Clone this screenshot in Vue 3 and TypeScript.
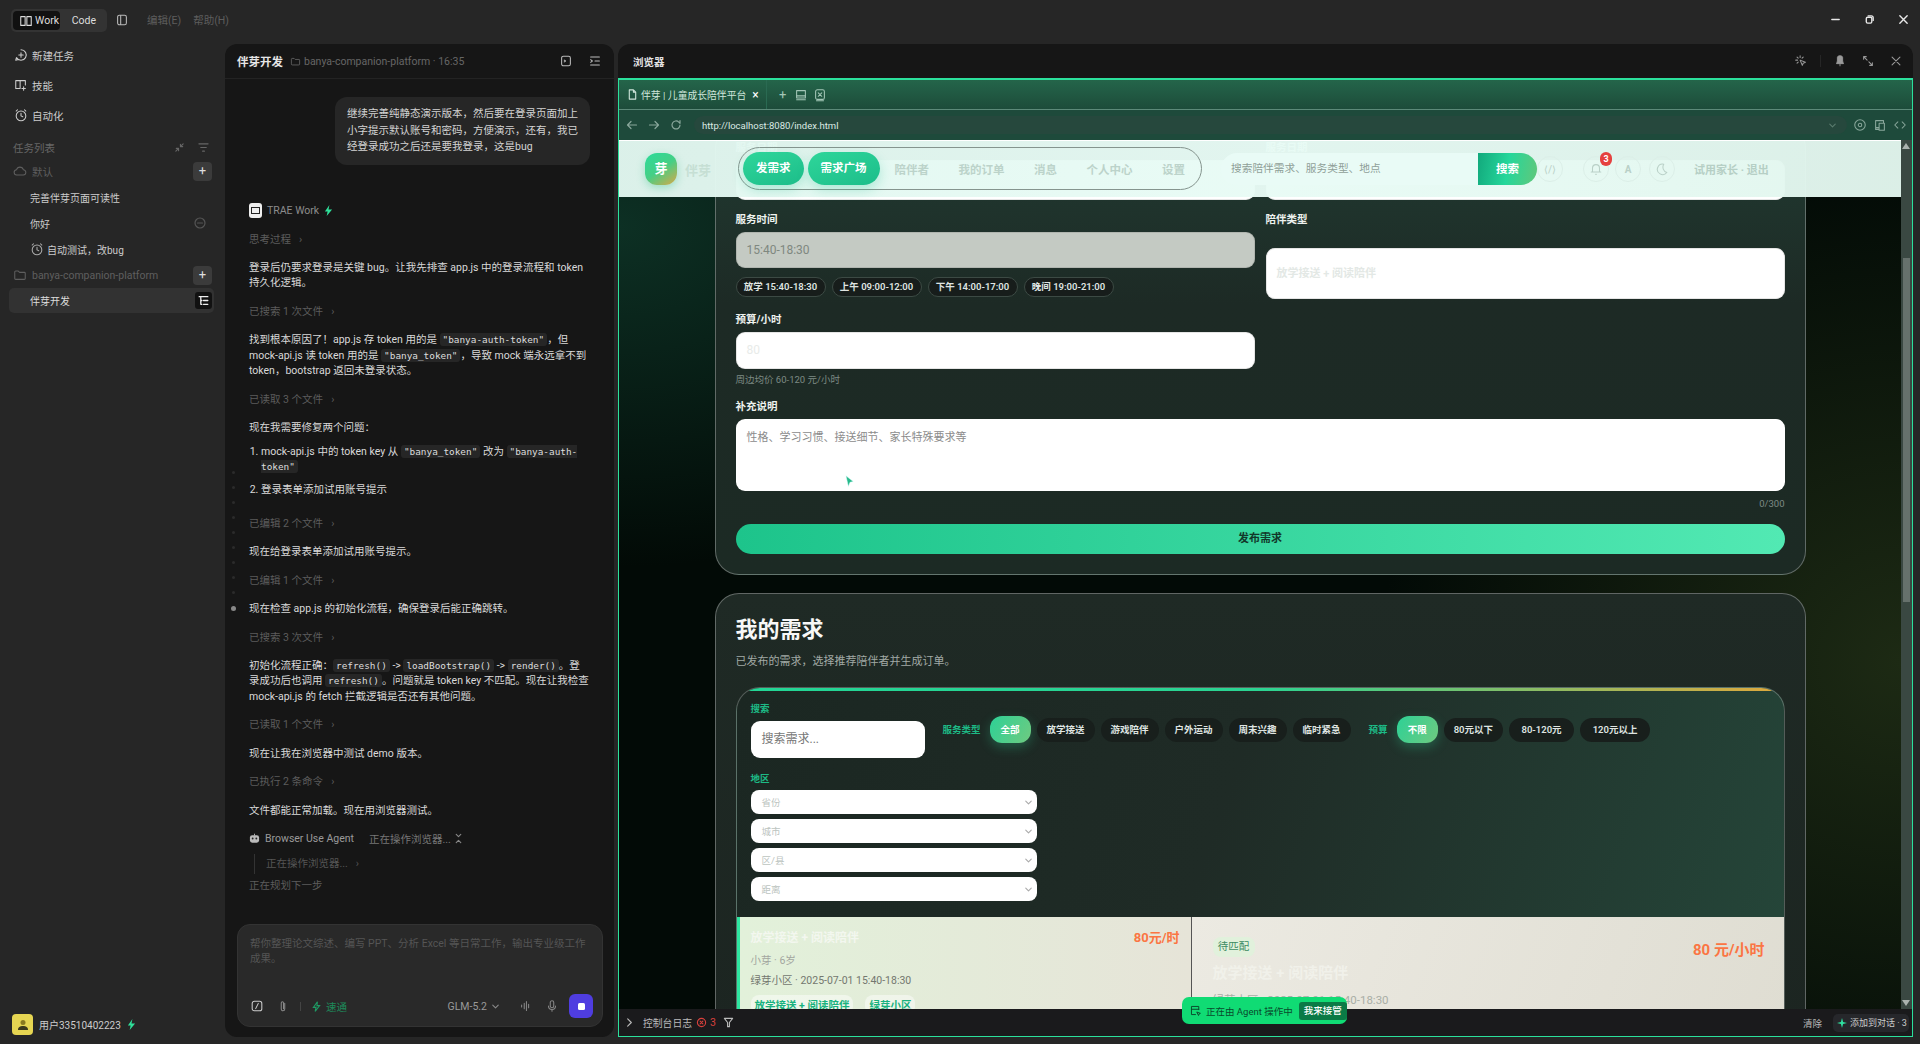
<script setup lang="ts">
type Block = { kind: 'text' | 'meta' | 'list'; text?: string; items?: string[] }

const BLOCKS: Block[] = [
  { kind: 'meta', text: '思考过程' },
  { kind: 'text', text: '登录后仍要求登录是关键 bug。让我先排查 app.js 中的登录流程和 token 持久化逻辑。' },
  { kind: 'meta', text: '已搜索 1 次文件' },
  { kind: 'text', text: '找到根本原因了！app.js 存 token 用的是 `"banya-auth-token"`，但 mock-api.js 读 token 用的是 `"banya_token"`，导致 mock 端永远拿不到 token，bootstrap 返回未登录状态。' },
  { kind: 'meta', text: '已读取 3 个文件' },
  { kind: 'text', text: '现在我需要修复两个问题：' },
  { kind: 'list', items: ['mock-api.js 中的 token key 从 `"banya_token"` 改为 `"banya-auth-token"`', '登录表单添加试用账号提示'] },
  { kind: 'meta', text: '已编辑 2 个文件' },
  { kind: 'text', text: '现在给登录表单添加试用账号提示。' },
  { kind: 'meta', text: '已编辑 1 个文件' },
  { kind: 'text', text: '现在检查 app.js 的初始化流程，确保登录后能正确跳转。' },
  { kind: 'meta', text: '已搜索 3 次文件' },
  { kind: 'text', text: '初始化流程正确：`refresh()` -> `loadBootstrap()` -> `render()`。登录成功后也调用 `refresh()`。问题就是 token key 不匹配。现在让我检查 mock-api.js 的 fetch 拦截逻辑是否还有其他问题。' },
  { kind: 'meta', text: '已读取 1 个文件' },
  { kind: 'text', text: '现在让我在浏览器中测试 demo 版本。' },
  { kind: 'meta', text: '已执行 2 条命令' },
  { kind: 'text', text: '文件都能正常加载。现在用浏览器测试。' }
]

// backticks mark inline code, so odd parts are code
function parts(s: string) {
  return s.split('`').map((text, i) => ({ text, code: i % 2 === 1 }))
}

const DOTS = Array.from({ length: 9 })
const NAV_LINKS = ['陪伴者', '我的订单', '消息', '个人中心', '设置']
const TIME_CHIPS = ['放学 15:40-18:30', '上午 09:00-12:00', '下午 14:00-17:00', '晚间 19:00-21:00']
const SERVICE_CHIPS = ['放学接送', '游戏陪伴', '户外运动', '周末兴趣', '临时紧急']
const BUDGET_CHIPS = ['80元以下', '80-120元', '120元以上']
const REGIONS = ['省份', '城市', '区/县', '距离']
</script>

<template>
  <div class="app">
    <header class="titlebar">
      <div class="mode-switch">
        <span class="mode active">
          <svg class="ico" viewBox="0 0 16 16"><path d="M2 3h5v10H2zM9 3h5v10H9z" /></svg>Work
        </span>
        <span class="mode">Code</span>
      </div>
      <svg class="ico layout-ico" viewBox="0 0 16 16"><rect x="3" y="2.5" width="10" height="11" rx="2" /><path d="M6.5 3v10" /></svg>
      <span class="menu first">编辑(E)</span>
      <span class="menu">帮助(H)</span>
      <div class="win-controls">
        <svg class="ico" viewBox="0 0 12 12"><path d="M2 6h8" /></svg>
        <svg class="ico" viewBox="0 0 12 12"><rect x="2.5" y="3.5" width="6" height="6.5" rx="1.5" /><path d="M4.5 2h3.5a2 2 0 0 1 2 2v3" /></svg>
        <svg class="ico" viewBox="0 0 12 12"><path d="M2 2l8 8M10 2l-8 8" /></svg>
      </div>
    </header>

    <div class="workspace">
      <aside class="sidebar">
        <div class="side-item">
          <svg class="ico" viewBox="0 0 16 16"><path d="M8 2a6 6 0 1 1-5.2 9L2 14l3-.8" /><path d="M8 5.5v5M5.5 8h5" /></svg>新建任务
        </div>
        <div class="side-item">
          <svg class="ico" viewBox="0 0 16 16"><path d="M2 3h5v9H2zM7 3h6v5M9 12h4M11 10v4" /></svg>技能
        </div>
        <div class="side-item">
          <svg class="ico" viewBox="0 0 16 16"><circle cx="8" cy="9" r="5.5" /><path d="M8 6v3l2 1M2.5 3.5 4 2M13.5 3.5 12 2" /></svg>自动化
        </div>
        <div class="side-heading">
          <span>任务列表</span>
          <svg class="ico small" viewBox="0 0 12 12"><path d="M7 5l3-3M7 2.5V5h2.5M5 7l-3 3M5 9.5V7H2.5" /></svg>
          <svg class="ico small" viewBox="0 0 12 12"><path d="M1 2h10M3 6h6M5 10h2" /></svg>
        </div>
        <div class="side-group">
          <svg class="ico" viewBox="0 0 16 16"><path d="M4.5 12.5a3 3 0 0 1-.4-6 4 4 0 0 1 7.7 0 3 3 0 0 1-.3 6z" /></svg>
          <span class="grow">默认</span>
          <span class="plus-btn">+</span>
        </div>
        <div class="task">完善伴芽页面可读性</div>
        <div class="task">
          <span class="grow">你好</span>
          <svg class="ico minus" viewBox="0 0 12 12"><circle cx="6" cy="6" r="5" /><path d="M3.5 6h5" /></svg>
        </div>
        <div class="task">
          <svg class="ico" viewBox="0 0 16 16"><circle cx="8" cy="9" r="5.5" /><path d="M8 6v3l2 1M2.5 3.5 4 2M13.5 3.5 12 2" /></svg>
          自动测试，改bug
        </div>
        <div class="side-group">
          <svg class="ico" viewBox="0 0 16 16"><path d="M2 4.5a1 1 0 0 1 1-1h3l1.5 1.5H13a1 1 0 0 1 1 1V12a1 1 0 0 1-1 1H3a1 1 0 0 1-1-1z" /></svg>
          <span class="grow">banya-companion-platform</span>
          <span class="plus-btn">+</span>
        </div>
        <div class="task active">
          <span class="grow">伴芽开发</span>
          <span class="tree-btn">
            <svg class="ico" viewBox="0 0 12 12"><path d="M2 2.5h8M6 6h4M6 9.5h4M3.5 2.500v7h1M3.5 6h1" /></svg>
          </span>
        </div>
        <div class="user">
          <span class="avatar">
            <svg viewBox="0 0 16 16"><circle cx="8" cy="5.5" r="2.5" fill="#8a7a20" /><path d="M3 13c0-3 2-4 5-4s5 1 5 4z" fill="#3d3a1c" /></svg>
          </span>
          用户33510402223
          <svg class="bolt" viewBox="0 0 10 12"><path d="M6 0 1 7h3l-1 5 6-7H5z" /></svg>
        </div>
      </aside>

      <section class="chat">
        <div class="panel-head">
          <b class="chat-title">伴芽开发</b>
          <svg class="ico small folder" viewBox="0 0 16 16"><path d="M2 4.5a1 1 0 0 1 1-1h3l1.5 1.5H13a1 1 0 0 1 1 1V12a1 1 0 0 1-1 1H3a1 1 0 0 1-1-1z" /></svg>
          <span class="chat-path">banya-companion-platform · 16:35</span>
          <svg class="ico head-ico" viewBox="0 0 16 16"><rect x="3" y="2.5" width="10" height="11" rx="2" /><path d="M6 7l1.5 1L6 9" /></svg>
          <svg class="ico head-ico" viewBox="0 0 16 16"><path d="M3 3.5h10M8 8h5M3 12.5h10M3 6.5 5 8l-2 1.5" /></svg>
        </div>
        <div class="messages">
          <div class="bubble">继续完善纯静态演示版本，然后要在登录页面加上小字提示默认账号和密码，方便演示，还有，我已经登录成功之后还是要我登录，这是bug</div>
          <div class="agent-line">
            <span class="agent-logo"><i /></span>TRAE Work
            <svg class="bolt" viewBox="0 0 10 12"><path d="M6 0 1 7h3l-1 5 6-7H5z" /></svg>
          </div>
          <template v-for="(b, i) in BLOCKS" :key="i">
            <div v-if="b.kind === 'meta'" class="meta">{{ b.text }}<span class="caret">›</span></div>
            <p v-else-if="b.kind === 'text'" class="msg">
              <template v-for="(p, j) in parts(b.text!)" :key="j"><code v-if="p.code">{{ p.text }}</code><template v-else>{{ p.text }}</template></template>
            </p>
            <ol v-else class="msg-list">
              <li v-for="(item, k) in b.items" :key="k">
                <template v-for="(p, j) in parts(item)" :key="j"><code v-if="p.code">{{ p.text }}</code><template v-else>{{ p.text }}</template></template>
              </li>
            </ol>
          </template>
          <div class="tool-line">
            <svg class="robot" viewBox="0 0 12 12"><rect x="1" y="2.5" width="10" height="8" rx="2.5" fill="#bbb" /><path d="M6 .8v2" stroke="#bbb" /><circle cx="4" cy="6" r="1" fill="#222" /><circle cx="8" cy="6" r="1" fill="#222" /></svg>
            <span>Browser Use Agent</span>
            <span class="tool-state">正在操作浏览器...</span>
            <svg class="ico small tool-toggle" viewBox="0 0 12 12"><path d="M3.5 1.500 6 4l2.500-2.500M3.5 10.500 6 8l2.500 2.500" /></svg>
          </div>
          <div class="tool-sub">正在操作浏览器...<span class="caret">›</span></div>
          <div class="planning">正在规划下一步</div>
        </div>
        <div class="composer">
          <div class="composer-text">帮你整理论文综述、编写 PPT、分析 Excel 等日常工作，输出专业级工作成果。</div>
          <div class="composer-tools">
            <svg class="ico tool" viewBox="0 0 16 16"><rect x="2.5" y="2.5" width="11" height="11" rx="2.5" /><path d="M9.5 5 6.5 11" /></svg>
            <svg class="ico tool dim" viewBox="0 0 16 16"><path d="M10 5v6.5a2 2 0 0 1-4 0V4.500a1.300 1.300 0 0 1 2.600 0V11" /></svg>
            <span class="tool-sep" />
            <svg class="speed-bolt" viewBox="0 0 10 12"><path d="M6 .7 1.5 7h3l-1 4.500L8.500 5H5.500z" /></svg>
            <span class="speed">速通</span>
            <span class="grow" />
            <span class="model">GLM-5.2</span>
            <svg class="ico small chev" viewBox="0 0 12 12"><path d="M3 4.500 6 7.500l3-3" /></svg>
            <svg class="ico tool dim wave" viewBox="0 0 16 16"><path d="M3 7v2M6 5v6M8.500 3v10M11 6v4" /></svg>
            <svg class="ico tool dim" viewBox="0 0 16 16"><rect x="6" y="2" width="4" height="8" rx="2" /><path d="M4 8a4 4 0 0 0 8 0M8 12v2" /></svg>
            <span class="stop"><i /></span>
          </div>
        </div>
        <div class="timeline">
          <i v-for="(_, i) in DOTS" :key="i" />
          <i class="on" />
        </div>
      </section>

      <section class="browser">
        <div class="browser-head">
          <b>浏览器</b>
          <span class="grow" />
          <svg class="ico" viewBox="0 0 16 16"><path d="M7 7l6 2.500-2.500 1L9.500 13zM4 7H2M7 4V2M4.800 4.800 3.500 3.500M9.200 4.800 10.500 3.500M4.800 9.200 3.500 10.500" /></svg>
          <span class="head-sep" />
          <svg class="pin" viewBox="0 0 16 16"><path d="M8 14V11M4 11c0-1 1-1.500 1-3V4c0-1 1-2 3-2s3 1 3 2v4c0 1.500 1 2 1 3z" fill="#9a9a9a" /></svg>
          <svg class="ico" viewBox="0 0 16 16"><path d="M3 3l4 4M3 3v3M3 3h3M13 13l-4-4M13 13v-3M13 13h-3" /></svg>
          <svg class="ico" viewBox="0 0 16 16"><path d="M3.500 3.500l9 9M12.500 3.500l-9 9" /></svg>
        </div>

        <div class="frame">
          <div class="tabbar">
            <div class="tab">
              <svg class="ico small" viewBox="0 0 12 12"><path d="M2.500 1h4.500l2.500 2.500V11h-7zM7 1v2.500h2.500" /></svg>
              <span>伴芽 | 儿童成长陪伴平台</span>
              <span class="tab-x">×</span>
            </div>
            <span class="tab-plus">+</span>
            <svg class="ico tab-ico" viewBox="0 0 16 16"><rect x="3" y="3" width="10" height="8.500" /><path d="M3 13.500h10M3 9h10" /></svg>
            <svg class="ico tab-ico" viewBox="0 0 16 16"><rect x="3" y="2" width="10" height="11" rx="2" /><path d="M6 5.500l4 4M10 5.500l-4 4M4 14.500h8" /></svg>
          </div>
          <div class="addressbar">
            <svg class="ico nav-ico" viewBox="0 0 12 12"><path d="M10.500 6H1.500M5 2.500 1.500 6 5 9.500" /></svg>
            <svg class="ico nav-ico" viewBox="0 0 12 12"><path d="M1.500 6h9M7 2.500 10.500 6 7 9.500" /></svg>
            <svg class="ico nav-ico reload" viewBox="0 0 12 12"><path d="M10 6a4 4 0 1 1-1.200-2.900L10 4.300V1.500" /></svg>
            <div class="url">
              <span>http://localhost:8080/index.html</span>
              <svg class="ico small" viewBox="0 0 12 12"><path d="M3 4.500 6 7.500l3-3" /></svg>
            </div>
            <svg class="ico addr-ico" viewBox="0 0 16 16"><circle cx="8" cy="8" r="6" /><circle cx="8" cy="8" r="2" /></svg>
            <svg class="ico addr-ico" viewBox="0 0 16 16"><path d="M7 13H3V3h9v3M7 6h6v8H7zM3 11h4" /></svg>
            <svg class="ico addr-ico" viewBox="0 0 16 16"><path d="M5.500 4.500 2 8l3.500 3.500M10.500 4.500 14 8l-3.500 3.500" /></svg>
          </div>

          <div class="page">
            <div class="page-view">
              <div class="page-scroll">
                <div class="card form-card">
                  <div class="form-row">
                    <div>
                      <div class="label">服务日期</div>
                      <div class="input clipped" />
                    </div>
                    <div>
                      <div class="label">服务日期</div>
                      <div class="input clipped" />
                    </div>
                  </div>
                  <div class="form-row second">
                    <div>
                      <div class="label">服务时间</div>
                      <div class="input time">15:40-18:30</div>
                      <div class="time-chips">
                        <span v-for="c in TIME_CHIPS" :key="c">{{ c }}</span>
                      </div>
                      <div class="label budget">预算/小时</div>
                      <div class="input budget-input">80</div>
                      <div class="hint">周边均价 60-120 元/小时</div>
                    </div>
                    <div>
                      <div class="label">陪伴类型</div>
                      <div class="input type-select">放学接送 + 阅读陪伴</div>
                    </div>
                  </div>
                  <div class="label note">补充说明</div>
                  <div class="textarea">性格、学习习惯、接送细节、家长特殊要求等</div>
                  <div class="count">0/300</div>
                  <div class="publish">发布需求</div>
                </div>

                <div class="card list-card">
                  <h2>我的需求</h2>
                  <p class="sub">已发布的需求，选择推荐陪伴者并生成订单。</p>
                  <div class="filters">
                    <div class="filter-body">
                      <div class="filter-top">
                        <div>
                          <div class="f-label">搜索</div>
                          <div class="f-search">搜索需求...</div>
                        </div>
                        <div class="f-group">
                          <span class="f-label">服务类型</span>
                          <span class="pill on">全部</span>
                          <span v-for="c in SERVICE_CHIPS" :key="c" class="pill">{{ c }}</span>
                        </div>
                        <div class="f-group budget-group">
                          <span class="f-label">预算</span>
                          <span class="pill on">不限</span>
                          <span v-for="c in BUDGET_CHIPS" :key="c" class="pill">{{ c }}</span>
                        </div>
                      </div>
                      <div class="f-label region">地区</div>
                      <div class="regions">
                        <div v-for="r in REGIONS" :key="r" class="region-select">
                          <span>{{ r }}</span>
                          <svg class="ico small" viewBox="0 0 12 12"><path d="M3 4.500 6 7.500l3-3" /></svg>
                        </div>
                      </div>
                    </div>
                    <div class="results">
                      <div class="result first">
                        <div class="r-head"><b>放学接送 + 阅读陪伴</b><b class="price">80元/时</b></div>
                        <div class="r-who">小芽 · 6岁</div>
                        <div class="r-where">绿芽小区 · 2025-07-01 15:40-18:30</div>
                        <div class="r-tags"><span>放学接送 + 阅读陪伴</span><span>绿芽小区</span></div>
                      </div>
                      <div class="result detail">
                        <div class="d-main">
                          <span class="badge">待匹配</span>
                          <div class="d-title">放学接送 + 阅读陪伴</div>
                          <div class="d-where">绿芽小区 · 2025-07-01 15:40-18:30</div>
                        </div>
                        <b class="d-price">80 元/小时</b>
                      </div>
                    </div>
                  </div>
                </div>
              </div>

              <div class="page-header">
                <span class="logo">芽</span>
                <b class="brand">伴芽</b>
                <nav class="nav">
                  <span class="nav-btn">发需求</span>
                  <span class="nav-btn">需求广场</span>
                  <span v-for="n in NAV_LINKS" :key="n" class="nav-link">{{ n }}</span>
                </nav>
                <div class="search">
                  <span class="search-text">搜索陪伴需求、服务类型、地点</span>
                  <b class="search-btn">搜索</b>
                </div>
                <span class="round first">
                  <span class="round-text">⟨/⟩</span>
                </span>
                <span class="round bell">
                  <svg class="ico" viewBox="0 0 16 16"><path d="M4 11.500V7a4 4 0 0 1 8 0v4.500zM2.500 11.500h11M7.500 14h1" /></svg>
                  <i class="bell-badge">3</i>
                </span>
                <span class="round"><b class="round-text">A</b></span>
                <span class="round moon">
                  <svg class="ico" viewBox="0 0 16 16"><path d="M10 2.500a6 6 0 1 0 3.500 9.500A6.500 6.500 0 0 1 10 2.500z" /></svg>
                </span>
                <b class="account">试用家长 · 退出</b>
              </div>

              <svg class="cursor" viewBox="0 0 12 16"><path d="M1 1l9 7-4 1-2 5z" fill="#27b98a" stroke="#dff" stroke-width=".6" /></svg>
            </div>
            <div class="scrollbar">
              <i class="arrow up" />
              <i class="thumb" />
              <i class="arrow down" />
            </div>
          </div>

          <div class="console">
            <svg class="ico small" viewBox="0 0 12 12"><path d="M4 2l4 4-4 4" /></svg>
            <span class="console-title">控制台日志</span>
            <svg class="ico small err" viewBox="0 0 12 12"><circle cx="6" cy="6" r="4.500" /><path d="M4.500 4.500l3 3M7.500 4.500l-3 3" /></svg>
            <span class="err-count">3</span>
            <svg class="ico small funnel" viewBox="0 0 12 12"><path d="M1.500 1.500h9L7 6v4.500H5V6z" /></svg>
            <span class="grow" />
            <span class="console-clear">清除</span>
            <span class="add-chat">
              <svg class="spark" viewBox="0 0 12 12"><path d="M6 0l1.300 4.700L12 6 7.300 7.300 6 12 4.700 7.300 0 6l4.700-1.300z" /></svg>
              添加到对话 · 3
            </span>
          </div>

          <div class="agent-pill">
            <svg class="ico" viewBox="0 0 16 16"><path d="M12 7V3H3v10h5M3 6.500h9M10 10l4 1.500-1.500.6-.6 1.600z" /></svg>
            <span>正在由 Agent 操作中</span>
            <b>我来接管</b>
          </div>
        </div>
      </section>
    </div>
  </div>
</template>

<style scoped>
.app {
  --sans: Roboto, "Noto Sans CJK SC", sans-serif;
  width: 1920px;
  height: 1044px;
  display: flex;
  flex-direction: column;
  overflow: hidden;
  background: #262626;
  color: #ddd;
  font-family: var(--sans);
  font-size: 10.5px;
}
.grow {
  flex: 1;
}
.ico {
  width: 14px;
  height: 14px;
  flex: none;
  fill: none;
  stroke: currentColor;
  stroke-width: 1.2;
  stroke-linecap: round;
  stroke-linejoin: round;
}
.ico.small {
  width: 11px;
  height: 11px;
}
.bolt {
  width: 9px;
  height: 11px;
  flex: none;
  fill: #2fe09a;
}

/* title bar */
.titlebar {
  height: 44px;
  flex: none;
  display: flex;
  align-items: flex-start;
  padding: 9px 11px 0 11px;
  box-sizing: border-box;
}
.mode-switch {
  display: flex;
  width: 96px;
  height: 23px;
  padding: 2px;
  box-sizing: border-box;
  background: #333;
  border-radius: 5px;
  line-height: 19px;
  color: #ddd;
}
.mode {
  padding: 0 9px 0 12px;
}
.mode.active {
  display: flex;
  align-items: center;
  gap: 2px;
  width: 51px;
  box-sizing: border-box;
  padding: 0 0 0 6px;
  background: #111;
  border-radius: 4px;
}
.layout-ico {
  margin: 4px 0 0 8px;
  color: #bbb;
}
.menu {
  margin: 5px 0 0 12px;
  color: #5d5d5d;
  line-height: 14px;
}
.menu.first {
  margin-left: 18px;
}
.win-controls {
  margin-left: auto;
  display: flex;
  gap: 23px;
  color: #e8e8e8;
  padding-top: 5px;
}
.win-controls .ico {
  width: 11px;
  height: 11px;
  stroke-width: 1.5;
}

.workspace {
  flex: 1;
  min-height: 0;
  display: flex;
  padding-bottom: 7px;
}

/* left sidebar */
.sidebar {
  width: 225px;
  flex: none;
  box-sizing: border-box;
  margin-top: -4px;
  padding: 0 11px 2px 9px;
  display: flex;
  flex-direction: column;
}
.side-item {
  height: 30px;
  display: flex;
  align-items: center;
  gap: 4px;
  padding-left: 5px;
  color: #ccc;
  font-size: 10.5px;
}
.side-heading {
  display: flex;
  align-items: center;
  gap: 13px;
  height: 22px;
  margin-top: 6px;
  padding: 0 5px 0 4px;
  color: #666;
  font-size: 10.5px;
}
.side-heading span {
  flex: 1;
}
.side-group {
  height: 26px;
  display: flex;
  align-items: center;
  gap: 5px;
  padding: 0 2px 0 4px;
  color: #5f5f5f;
}
.plus-btn {
  width: 19px;
  height: 19px;
  background: #3b3b3b;
  border-radius: 4px;
  color: #ddd;
  text-align: center;
  line-height: 18px;
  font-size: 13px;
}
.task {
  height: 26px;
  display: flex;
  align-items: center;
  gap: 3px;
  padding: 0 8px 0 21px;
  color: #ccc;
  font-size: 10px;
}
.task .ico {
  color: #aaa;
}
.task .minus {
  width: 12px;
  height: 12px;
  color: #555;
}
.task.active {
  height: 25px;
  margin-top: 0;
  padding-right: 2px;
  background: #323232;
  border-radius: 5px;
  color: #ddd;
}
.tree-btn {
  width: 17px;
  height: 17px;
  display: flex;
  align-items: center;
  justify-content: center;
  background: #111;
  border-radius: 3px;
}
.tree-btn .ico {
  width: 13px;
  height: 13px;
  color: #eee;
}
.user {
  margin-top: auto;
  display: flex;
  align-items: center;
  gap: 6px;
  padding-left: 3px;
  color: #ccc;
  font-size: 10px;
}
.avatar {
  width: 21px;
  height: 21px;
  border-radius: 4px;
  background: #e6d552;
  display: flex;
  align-items: center;
  justify-content: center;
}
.avatar svg {
  width: 16px;
  height: 16px;
}

/* chat column */
.chat {
  position: relative;
  width: 389px;
  flex: none;
  display: flex;
  flex-direction: column;
  box-sizing: border-box;
  background: #161616;
  border-radius: 12px;
}
.panel-head {
  height: 35px;
  flex: none;
  display: flex;
  align-items: center;
  padding: 0 12px 0 12px;
  border-bottom: 1px solid #232323;
  box-sizing: border-box;
}
.chat-title {
  font-size: 11.5px;
  color: #e6e6e6;
}
.folder {
  margin-left: 7px;
  color: #666;
}
.chat-path {
  flex: 1;
  margin-left: 3px;
  color: #666;
}
.head-ico {
  margin-left: 15px;
  color: #bbb;
}
.messages {
  flex: 1;
  min-height: 0;
  padding: 18px 24px 0;
  display: flex;
  flex-direction: column;
  gap: 13.35px;
}
.bubble {
  align-self: flex-end;
  width: 255px;
  box-sizing: border-box;
  margin: 0 0 25px;
  padding: 9px 12px;
  background: #262626;
  border-radius: 12px;
  line-height: 16.7px;
  color: #d4d4d4;
}
.agent-line {
  height: 15px;
  display: flex;
  align-items: center;
  gap: 5px;
  color: #8c8c8c;
}
.agent-logo {
  width: 13px;
  height: 15px;
  background: #eee;
  border-radius: 3px;
  display: flex;
  align-items: center;
  justify-content: center;
}
.agent-logo i {
  width: 7px;
  height: 5px;
  border: 1.5px solid #222;
}
.meta {
  height: 15px;
  line-height: 15px;
  color: #5c5c5c;
}
.caret {
  margin-left: 8px;
}
.msg {
  margin: 0;
  line-height: 15.3px;
  color: #d9d9d9;
}
code {
  font-family: "DejaVu Sans Mono", monospace;
  font-size: 9.4px;
  padding: 1px 3px;
  background: #262626;
  border-radius: 3px;
  color: #ddd;
}
.msg-list {
  margin: -4.5px 0 5.5px;
  padding: 0 0 0 12px;
  line-height: 15.3px;
  color: #d9d9d9;
}
.msg-list li + li {
  margin-top: 7px;
}
.tool-line {
  height: 15px;
  display: flex;
  align-items: center;
  color: #9a9a9a;
}
.robot {
  width: 11px;
  height: 11px;
  margin-right: 5px;
  stroke-width: 1;
}
.tool-state {
  margin-left: 15px;
  color: #777;
}
.tool-toggle {
  margin-left: 2px;
  color: #888;
}
.tool-sub {
  height: 20px;
  margin: -6px 0 0 5px;
  padding-left: 11px;
  border-left: 1px solid #333;
  line-height: 20px;
  color: #555;
}
.planning {
  margin-top: -9px;
  color: #5c5c5c;
  line-height: 15px;
}
.composer {
  flex: none;
  height: 103px;
  margin: 0 11px 10px 12px;
  padding: 11px 9px 8px 12px;
  box-sizing: border-box;
  display: flex;
  flex-direction: column;
  background: #292929;
  border: 1px solid #333;
  border-radius: 13px;
}
.composer-text {
  flex: 1;
  color: #555;
  line-height: 15px;
}
.composer-tools {
  height: 24px;
  display: flex;
  align-items: center;
  color: #777;
}
.tool {
  margin-right: 12px;
  color: #ccc;
}
.tool.dim {
  color: #888;
}
.tool-sep {
  width: 1px;
  height: 9px;
  background: #444;
  margin-right: 11px;
  margin-left: -2px;
}
.speed-bolt {
  width: 9px;
  height: 11px;
  fill: none;
  stroke: #1e9a64;
  stroke-width: 1.2;
}
.speed {
  margin-left: 5px;
  color: #1e8a5a;
}
.model {
  color: #999;
}
.chev {
  margin: 0 18px 0 3px;
  color: #888;
}
.stop {
  width: 24px;
  height: 24px;
  display: flex;
  align-items: center;
  justify-content: center;
  background: #4f3de0;
  border-radius: 6px;
  margin-left: -2px;
}
.stop i {
  width: 7px;
  height: 7px;
  background: #fff;
  border-radius: 1.5px;
}
.timeline {
  position: absolute;
  left: 6px;
  top: 427px;
  display: flex;
  flex-direction: column;
  gap: 12px;
}
.timeline i {
  width: 3px;
  height: 3px;
  margin-left: 1px;
  border-radius: 50%;
  background: #2b2b2b;
}
.timeline i.on {
  width: 5px;
  height: 5px;
  margin-left: 0;
  background: #888;
}

/* browser panel */
.browser {
  flex: 1;
  min-width: 0;
  margin: 0 7px 0 4px;
  display: flex;
  flex-direction: column;
  background: #161616;
  border-radius: 12px;
}
.browser-head {
  height: 34px;
  flex: none;
  display: flex;
  align-items: center;
  gap: 14px;
  padding: 0 10px 0 15px;
  color: #999;
}
.browser-head b {
  color: #e2e2e2;
  font-size: 10.5px;
}
.head-sep {
  width: 1px;
  height: 12px;
  margin: 0 -2px;
  background: #262626;
}
.pin {
  width: 14px;
  height: 14px;
  stroke: #9a9a9a;
}
.frame {
  position: relative;
  flex: 1;
  min-height: 0;
  display: flex;
  flex-direction: column;
  border: 1px solid #2be09c;
  border-top-width: 2px;
  overflow: hidden;
}
.tabbar {
  height: 30px;
  flex: none;
  display: flex;
  align-items: center;
  background: linear-gradient(#24654a, #1d4c3a);
  border-bottom: 1px solid #5c8a79;
  box-sizing: border-box;
  color: #a3c6b7;
}
.tab {
  width: 148px;
  height: 100%;
  display: flex;
  align-items: center;
  gap: 3px;
  padding-left: 8px;
  box-sizing: border-box;
  border-right: 1px solid #2a6a52;
  color: #cfe6db;
  font-size: 9.8px;
  white-space: nowrap;
}
.tab-x {
  margin-left: 3px;
  color: #fff;
  font-size: 12px;
}
.tab-plus {
  margin: 0 8px 0 12px;
  font-size: 13px;
}
.tab-ico {
  margin-right: 5px;
}
.addressbar {
  height: 30px;
  flex: none;
  display: flex;
  align-items: center;
  background: #1e4a3b;
  color: #89a79b;
  padding: 0 5px 0 7px;
  box-sizing: border-box;
}
.nav-ico {
  width: 12px;
  height: 12px;
  margin-right: 10px;
}
.reload {
  margin-right: 12px;
}
.url {
  flex: 1;
  height: 18px;
  display: flex;
  align-items: center;
  justify-content: space-between;
  padding: 0 9px 0 8px;
  background: #26483d;
  border-radius: 9px;
  color: #dceae4;
  font-size: 9.5px;
}
.url .ico {
  color: #5a7b6e;
}
.addr-ico {
  margin-left: 6px;
}
.page {
  flex: 1;
  min-height: 0;
  display: flex;
}
.page-view {
  position: relative;
  flex: 1;
  min-width: 0;
  overflow: hidden;
  background:
    radial-gradient(500px 340px at 0 10%, #0d3024 0, transparent 100%),
    radial-gradient(520px 500px at 100% 60%, #1d2a14 0, transparent 100%),
    #020a06;
}
.page-scroll {
  width: 1091px;
  margin: -16px auto 0;
}
.card {
  box-sizing: border-box;
  border: 1px solid rgba(255, 255, 255, 0.3);
  border-radius: 24px;
  padding: 0 20px;
}
.form-card {
  height: 451px;
  padding-top: 15px;
  background: linear-gradient(#213b32, #1d2a25 40%, #1c2a24);
}
.form-row {
  display: grid;
  grid-template-columns: 519px 519px;
  gap: 11px;
}
.form-row.second {
  margin-top: 12px;
}
.label {
  height: 14px;
  line-height: 16px;
  margin-bottom: 6px;
  color: #eef2ef;
  font-size: 10.5px;
  font-weight: 700;
}
.input {
  box-sizing: border-box;
  height: 36px;
  padding: 0 11px;
  background: #fff;
  border-radius: 9px;
  line-height: 36px;
  font-size: 12px;
  box-shadow: inset 0 0 0 1px rgba(0, 0, 0, 0.1);
}
.input.clipped {
  height: 40px;
}
.input.time {
  background: #c4cac3;
  color: #7f8880;
}
.time-chips {
  display: flex;
  gap: 6px;
  margin-top: 9px;
}
.time-chips span {
  width: 90px;
  height: 20px;
  box-sizing: border-box;
  border: 1px solid #3c4a44;
  border-radius: 10px;
  background: #171d1b;
  color: #dfe4e1;
  text-align: center;
  line-height: 18px;
  font-size: 9.5px;
  font-weight: 600;
}
.label.budget {
  margin-top: 15px;
}
.budget-input {
  height: 37px;
  line-height: 37px;
  color: #e8ebe9;
}
.hint {
  margin-top: 5px;
  line-height: 12px;
  color: #7d8a84;
  font-size: 9.5px;
}
.type-select {
  height: 51px;
  margin-top: 22px;
  line-height: 51px;
  color: #e3e8e5;
  font-size: 11px;
  font-weight: 600;
}
.label.note {
  margin-top: 13px;
}
.textarea {
  height: 72px;
  box-sizing: border-box;
  padding: 11px 11px;
  background: #fff;
  border-radius: 9px;
  color: #8b8b8b;
  font-size: 11px;
  line-height: 16px;
}
.count {
  margin-top: 7px;
  text-align: right;
  line-height: 12px;
  font-size: 9.5px;
  color: #7d8a84;
}
.publish {
  height: 30px;
  margin-top: 14px;
  border-radius: 15px;
  background: linear-gradient(90deg, #1dc48b, #52e9b3);
  color: #12382a;
  text-align: center;
  line-height: 30px;
  font-size: 11px;
  font-weight: 700;
}
.list-card {
  margin-top: 18px;
  padding-top: 21px;
  background: linear-gradient(#1f2a25, #1c2521);
}
.list-card h2 {
  margin: 0;
  height: 30px;
  line-height: 30px;
  color: #f7f7f7;
  font-size: 22px;
  font-weight: 700;
}
.sub {
  margin: 9px 0 0;
  line-height: 16px;
  color: #a2aaa6;
  font-size: 11px;
}
.filters {
  position: relative;
  margin-top: 17px;
  border-radius: 24px 24px 0 0;
  background: linear-gradient(110deg, #1b2722, #1f2b26 45%, #25473a);
  border: 1px solid rgba(255, 255, 255, 0.25);
  overflow: hidden;
}
.filters::before {
  content: "";
  position: absolute;
  top: 0;
  left: 0;
  right: 0;
  height: 3px;
  background: linear-gradient(90deg, #22d695, #2bd492 50%, #e0a83c);
}
.filter-body {
  padding: 15px 14px 16px;
}
.filter-top {
  display: flex;
  gap: 18px;
}
.f-label {
  line-height: 12px;
  color: #1db985;
  font-size: 9.5px;
  font-weight: 700;
  white-space: nowrap;
}
.f-search {
  width: 174px;
  height: 37px;
  margin-top: 6px;
  box-sizing: border-box;
  padding-left: 11px;
  background: #fff;
  border-radius: 9px;
  line-height: 37px;
  color: #777;
  font-size: 12px;
}
.f-group {
  margin-top: 13px;
  height: 27px;
  display: flex;
  align-items: center;
  gap: 6px;
}
.f-group .f-label {
  margin-right: 3px;
}
.pill {
  height: 24px;
  box-sizing: border-box;
  padding: 0 10px;
  background: #181f1c;
  border-radius: 12px;
  color: #dfe4e1;
  line-height: 24px;
  font-size: 9.5px;
  font-weight: 600;
  white-space: nowrap;
}
.pill.on {
  height: 27px;
  line-height: 27px;
  padding: 0 11px;
  background: linear-gradient(120deg, #2dd196, #6fca80);
  color: #fff;
  font-weight: 700;
  box-shadow: 0 4px 12px rgba(45, 209, 150, 0.3);
}
.budget-group .pill:nth-last-child(-n + 2) {
  padding: 0 12.5px;
}
.f-label.region {
  margin-top: 15px;
}
.regions {
  width: 286px;
  margin-top: 5px;
  display: flex;
  flex-direction: column;
  gap: 5px;
}
.region-select {
  height: 24px;
  display: flex;
  align-items: center;
  justify-content: space-between;
  padding: 0 3px 0 11px;
  background: #fff;
  border-radius: 8px;
  color: #bcc4c0;
  font-size: 9.5px;
}
.region-select .ico {
  color: #aaa;
}
.results {
  display: grid;
  grid-template-columns: 455px 593px;
}
.result {
  height: 120px;
  box-sizing: border-box;
}
.result.first {
  padding: 13px 11px 0 11px;
  border-left: 3px solid #2ee6a0;
  border-right: 1px solid #555;
  background: linear-gradient(90deg, #e2f1da, #e6e4d8);
  color: #8b8f88;
  font-size: 10.5px;
}
.r-head {
  display: flex;
  justify-content: space-between;
  line-height: 16px;
  color: #f3f7ef;
  font-size: 12px;
}
.price {
  color: #fb7543;
  font-size: 13px;
}
.r-who {
  margin-top: 7px;
  line-height: 16px;
  color: #a2a69f;
}
.r-where {
  margin-top: 4px;
  line-height: 16px;
  color: #73776f;
}
.r-tags {
  display: flex;
  gap: 12px;
  margin-top: 6px;
  color: #18b27e;
  font-weight: 700;
}
.r-tags span {
  padding: 2px 4px;
  background: rgba(255, 255, 255, 0.45);
  border-radius: 8px;
}
.result.detail {
  display: flex;
  justify-content: space-between;
  padding: 20px 20px 0 21px;
  background: linear-gradient(110deg, #eceae2, #dfddd2);
}
.badge {
  display: inline-block;
  width: 42px;
  height: 20px;
  background: #e1f1dc;
  border-radius: 8px;
  color: #3c8a62;
  text-align: center;
  line-height: 20px;
  font-size: 10.5px;
}
.d-title {
  margin-top: 4px;
  line-height: 24px;
  color: #f1f1ea;
  font-size: 15px;
  font-weight: 700;
}
.d-where {
  margin-top: 7px;
  line-height: 16px;
  color: #a9aea6;
  font-size: 11.5px;
}
.d-price {
  margin-top: 3px;
  line-height: 20px;
  color: #fb7543;
  font-size: 15px;
}
.page-header {
  position: absolute;
  top: 0;
  left: 0;
  right: 0;
  height: 57px;
  display: flex;
  align-items: center;
  padding: 0 0 0 26px;
  box-sizing: border-box;
  background: linear-gradient(90deg, rgba(226, 247, 240, 0.97), rgba(232, 251, 245, 0.97) 50%, rgba(226, 246, 238, 0.97));
  border-top: 1px solid #fff;
}
.logo {
  width: 32px;
  height: 32px;
  border-radius: 12px;
  background: linear-gradient(145deg, #2cdb9a, #45cf85 50%, #d8a848);
  box-shadow: 0 3px 9px rgba(40, 190, 130, 0.35);
  color: #fff;
  text-align: center;
  line-height: 31px;
  font-size: 13px;
  font-weight: 700;
}
.brand {
  margin-left: 8px;
  width: 53px;
  color: #c6dfd4;
  font-size: 13px;
}
.nav {
  width: 464px;
  height: 43px;
  flex: none;
  margin-top: -1px;
  display: flex;
  align-items: center;
  box-sizing: border-box;
  padding-left: 4px;
  border: 1px solid #85948e;
  border-radius: 22px;
}
.nav-btn {
  height: 33px;
  flex: none;
  padding: 0 13px;
  margin-right: 4px;
  border-radius: 17px;
  background: linear-gradient(160deg, #2ed69a, #1dbd8a);
  box-shadow: 0 5px 12px rgba(30, 190, 140, 0.28);
  color: #fff;
  line-height: 33px;
  font-size: 11.5px;
  font-weight: 700;
  white-space: nowrap;
}
.nav-link {
  margin-right: 29.5px;
  color: #bcd3ca;
  font-size: 11.5px;
  font-weight: 700;
  white-space: nowrap;
}
.nav-btn + .nav-link {
  margin-left: 11px;
}
.nav-link:last-child {
  margin-right: 0;
}
.search {
  width: 316px;
  height: 32px;
  margin-left: 19px;
  display: flex;
  flex: none;
  background: #e9fbf6;
  border-radius: 16px;
}
.search-text {
  flex: 1;
  padding-left: 10px;
  color: #8f9f98;
  line-height: 32px;
  font-size: 10.7px;
}
.search-btn {
  width: 59px;
  background: linear-gradient(100deg, #12a97c, #25d79b 50%, #62c77a);
  border-radius: 0 16px 16px 0;
  color: #fff;
  text-align: center;
  line-height: 32px;
  font-size: 11.5px;
}
.round {
  position: relative;
  width: 26px;
  height: 26px;
  flex: none;
  margin-left: 6px;
  display: flex;
  align-items: center;
  justify-content: center;
  border: 1px solid #dcefe8;
  border-radius: 50%;
  box-sizing: border-box;
  color: #b9d0c7;
}
.round.first {
  margin-left: 0;
}
.round.bell {
  margin-left: 20px;
}
.round.moon {
  margin-left: 8px;
}
.round-text {
  font-size: 10px;
}
.bell-badge {
  position: absolute;
  top: -5px;
  right: -4px;
  width: 12px;
  height: 14px;
  background: #e5413f;
  border-radius: 7px;
  color: #fff;
  text-align: center;
  font-style: normal;
  font-weight: 700;
  font-size: 9px;
  line-height: 14px;
}
.account {
  margin-left: 19px;
  color: #b6cfc5;
  font-size: 11px;
  white-space: nowrap;
}
.cursor {
  position: absolute;
  left: 226px;
  top: 335px;
  width: 10px;
  height: 13px;
}
.scrollbar {
  width: 11px;
  flex: none;
  position: relative;
  background: #3a4842;
}
.thumb {
  position: absolute;
  top: 118px;
  left: 2px;
  right: 2px;
  height: 344px;
  background: #66716c;
}
.arrow {
  position: absolute;
  left: 1px;
  border-left: 4.5px solid transparent;
  border-right: 4.5px solid transparent;
}
.arrow.up {
  top: 3px;
  border-bottom: 6px solid #aab2ae;
}
.arrow.down {
  bottom: 3px;
  border-top: 6px solid #aab2ae;
}
.console {
  height: 27px;
  flex: none;
  display: flex;
  align-items: center;
  padding: 0 3px 0 5px;
  background: #1a1a1c;
  color: #bbb;
}
.console-title {
  margin-left: 8px;
  color: #bbb;
  font-size: 9.8px;
}
.err {
  margin-left: 4px;
  color: #d8403c;
}
.err-count {
  margin-left: 3px;
  color: #d8403c;
}
.funnel {
  margin-left: 7px;
}
.console-clear {
  margin-right: 11px;
  font-size: 9.5px;
}
.add-chat {
  width: 76px;
  height: 18px;
  display: flex;
  align-items: center;
  gap: 3px;
  padding-left: 4px;
  box-sizing: border-box;
  background: #26272b;
  border-radius: 5px;
  color: #ccc;
  font-size: 9px;
  white-space: nowrap;
}
.spark {
  width: 10px;
  height: 12px;
  flex: none;
  fill: #2fe0a0;
}
.agent-pill {
  position: absolute;
  left: 563px;
  bottom: 12px;
  width: 165px;
  height: 27px;
  display: flex;
  align-items: center;
  gap: 4px;
  padding-left: 7px;
  box-sizing: border-box;
  background: #10db74;
  border-radius: 7px;
  color: #0a4a2c;
  font-size: 9.5px;
  white-space: nowrap;
}
.agent-pill .ico {
  width: 13px;
  height: 13px;
}
.agent-pill b {
  width: 48px;
  height: 18px;
  flex: none;
  margin-left: 2px;
  background: #0b7a46;
  border-radius: 3px;
  color: #fff;
  text-align: center;
  line-height: 18px;
  font-weight: 500;
}
</style>

<style>
html,
body {
  margin: 0;
  background: #262626;
  overflow: hidden;
}
</style>
